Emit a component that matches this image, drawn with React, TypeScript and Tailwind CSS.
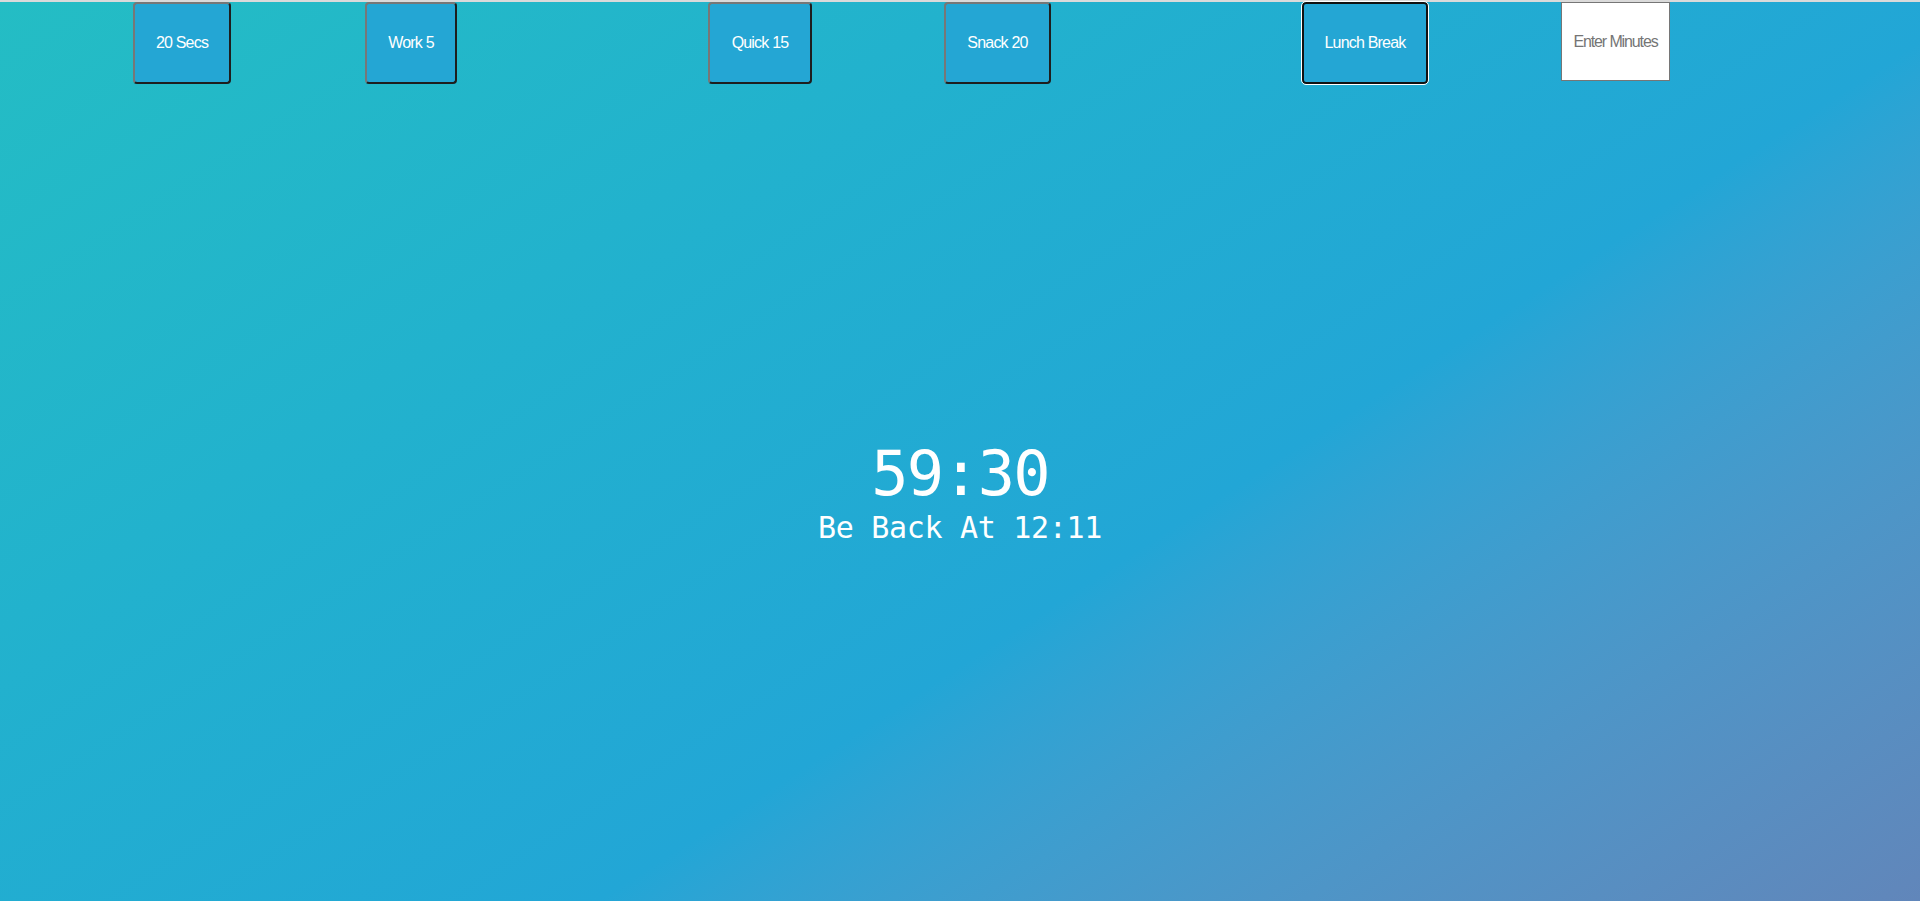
const presets = [
  { label: "20 Secs", w: "w-[98px]", ml: "ml-[133px]" },
  { label: "Work 5", w: "w-[92px]", ml: "ml-[134px]" },
  { label: "Quick 15", w: "w-[104px]", ml: "ml-[251px]" },
  { label: "Snack 20", w: "w-[107px]", ml: "ml-[132px]" },
];

const App = () => {
  return (
    <div className="h-[901px] w-full flex flex-col overflow-hidden bg-linear-147 from-[#24bdc4] via-[#22a6d6] via-60% to-[#6186ba] font-['Liberation_Sans',Arial,sans-serif]">
      <div className="h-[2px] w-full bg-[#dadada]" />
      <nav className="flex items-start">
        {presets.map((p) => (
          <button
            key={p.label}
            className={`${p.w} ${p.ml} h-[82px] rounded-[4px] border-2 border-t-[#777777] border-l-[#777777] border-r-[#1e1e1e] border-b-[#1e1e1e] bg-[#24a6d4] text-white text-[16px] tracking-[-0.05em]`}
          >
            {p.label}
          </button>
        ))}
        <button className="w-[126px] h-[82px] ml-[251px] rounded-[4px] border-2 border-[#111111] outline outline-1 outline-white bg-[#24a6d4] text-white text-[16px] tracking-[-0.05em]">
          Lunch Break
        </button>
        <input
          type="text"
          placeholder="Enter Minutes"
          className="w-[109px] h-[79px] ml-[133px] border border-[#767676] bg-white px-[8px] text-center text-[16px] tracking-[-0.07em] text-[#333] placeholder:text-[#757575] outline-none"
        />
      </nav>
      <main className="flex-1 flex flex-col items-center justify-center text-white font-['DejaVu_Sans_Mono',monospace]">
        <p className="text-[62px] leading-none tracking-[-0.03em]">59:30</p>
        <p className="mt-[8px] text-[30px] leading-none tracking-[-0.01em]">Be Back At 12:11</p>
      </main>
    </div>
  );
};

export default App;
